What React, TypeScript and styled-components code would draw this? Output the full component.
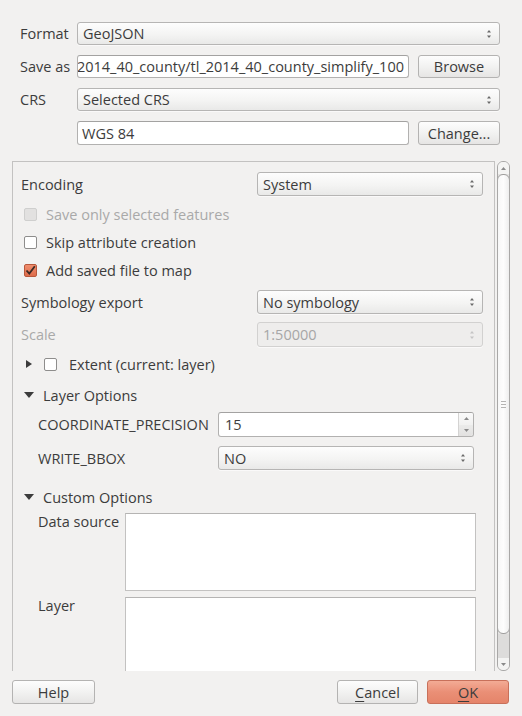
import React from "react";
import styled, { createGlobalStyle, css } from "styled-components";

const GlobalStyle = createGlobalStyle`
  html, body { margin: 0; padding: 0; background: #f2f1f0; }
  body {
    font-family: "Open Sans", "Noto Sans", "DejaVu Sans", sans-serif;
    font-size: 14.5px;
    color: #3c3c3c;
  }
  * { box-sizing: border-box; }
`;

const Root = styled.div`
  width: 522px;
  height: 716px;
  display: flex;
  flex-direction: column;
  overflow: hidden;
`;

const TopGrid = styled.div`
  display: grid;
  grid-template-columns: 52px 1fr 82px;
  grid-template-rows: 23px 23px 23px 24px;
  column-gap: 9px;
  row-gap: 10px;
  padding: 22px 22px 0 20px;
`;

const Label = styled.div<{ $disabled?: boolean; $top?: boolean }>`
  display: flex;
  align-items: ${(p) => (p.$top ? "flex-start" : "center")};
  white-space: nowrap;
  line-height: 17px;
  color: ${(p) => (p.$disabled ? "#a9a9a9" : "#3c3c3c")};
`;

const Span = styled.div<{ $col: string; $shift?: number }>`
  grid-column: ${(p) => p.$col};
  min-width: 0;
  margin-left: ${(p) => p.$shift ?? 0}px;
`;

const comboBase = css`
  height: 100%;
  width: 100%;
  display: flex;
  align-items: center;
  border-radius: 3px;
  white-space: nowrap;
  overflow: hidden;
`;

const ComboBox = styled.div<{ $disabled?: boolean }>`
  ${comboBase};
  justify-content: space-between;
  padding: 0 7px 0 5px;
  border: 1px solid ${(p) => (p.$disabled ? "#d2d1d0" : "#b6b5b4")};
  background: ${(p) =>
    p.$disabled
      ? "#eeedec"
      : "linear-gradient(#fdfdfd, #f4f4f3 55%, #e9e9e8)"};
  color: ${(p) => (p.$disabled ? "#a6a6a6" : "#3c3c3c")};
  box-shadow: 0 1px 0 rgba(255, 255, 255, 0.6);
`;

const TextInput = styled.div<{ $alignEnd?: boolean }>`
  ${comboBase};
  justify-content: ${(p) => (p.$alignEnd ? "flex-end" : "flex-start")};
  padding: 0 4px;
  border: 1px solid #b2b1b0;
  border-top-color: #a3a2a1;
  background: #ffffff;
`;

const InputText = styled.span`
  flex: none;
`;

const Button = styled.div<{ $primary?: boolean }>`
  height: 100%;
  display: flex;
  align-items: center;
  justify-content: center;
  border-radius: 3px;
  border: 1px solid ${(p) => (p.$primary ? "#c8705a" : "#b4b3b2")};
  background: ${(p) =>
    p.$primary
      ? "linear-gradient(#f3ab95, #ea8f76 50%, #e5846a)"
      : "linear-gradient(#fdfdfd, #f2f2f1 50%, #e6e5e4)"};
  color: #3c3c3c;
  white-space: nowrap;
  u { text-decoration-thickness: 1px; text-underline-offset: 3px; }
`;

const Arrows = () => (
  <svg width="6" height="10" viewBox="0 0 6 10">
    <path d="M3 1 L5 3.5 L1 3.5 Z" fill="#6a6a6a" />
    <path d="M3 9 L5 6.5 L1 6.5 Z" fill="#6a6a6a" />
  </svg>
);

const FaintArrows = () => (
  <svg width="6" height="10" viewBox="0 0 6 10">
    <path d="M3 1 L5 3.5 L1 3.5 Z" fill="#c4c4c4" />
    <path d="M3 9 L5 6.5 L1 6.5 Z" fill="#c4c4c4" />
  </svg>
);

/* ---------- scroll area ---------- */

const ScrollFrame = styled.div`
  margin: 16px 12px 0 12px;
  height: 510px;
  display: flex;
  gap: 2px;
`;

const Panel = styled.div`
  flex: 1;
  border: 1px solid #c3c2c1;
  border-bottom: none;
  padding: 10px 11px 0 8px;
  display: flex;
  flex-direction: column;
  overflow: hidden;
`;

const Row = styled.div<{ $h: number; $mt: number; $indent?: number }>`
  flex: none;
  height: ${(p) => p.$h}px;
  margin-top: ${(p) => p.$mt}px;
  padding-left: ${(p) => p.$indent ?? 0}px;
  display: flex;
  align-items: center;
`;

const FormRow = styled.div<{ $mt: number; $labelW: number; $h: number; $right?: number }>`
  flex: none;
  display: grid;
  grid-template-columns: ${(p) => p.$labelW}px 1fr;
  height: ${(p) => p.$h}px;
  margin-top: ${(p) => p.$mt}px;
  margin-right: ${(p) => p.$right ?? 0}px;
`;

const SubRow = styled(FormRow)`
  padding-left: 17px;
`;

const CheckBox = styled.span<{ $state: "off" | "on" | "disabled"; $ml?: number }>`
  width: 13px;
  height: 13px;
  flex: none;
  margin-left: ${(p) => p.$ml ?? 0}px;
  border-radius: 2px;
  display: inline-flex;
  align-items: center;
  justify-content: center;
  ${(p) =>
    p.$state === "on"
      ? css`
          border: 1px solid #b8583c;
          background: linear-gradient(#f08e6e, #de6c4b);
        `
      : p.$state === "disabled"
      ? css`
          border: 1px solid #cfcfce;
          background: #e2e1e0;
        `
      : css`
          border: 1px solid #8e8d8c;
          background: #ffffff;
        `}
`;

const CheckLabel = styled.span<{ $disabled?: boolean; $gap: number }>`
  margin-left: ${(p) => p.$gap}px;
  color: ${(p) => (p.$disabled ? "#a9a9a9" : "#3c3c3c")};
  white-space: nowrap;
`;

const Check = () => (
  <svg width="11" height="11" viewBox="0 0 11 11">
    <path d="M1.5 5.5 L4.3 8.6 L9.8 1.2" fill="none" stroke="#3a2a25" strokeWidth="1.8" />
  </svg>
);

const Triangle = styled.span<{ $open?: boolean }>`
  width: 0;
  height: 0;
  flex: none;
  ${(p) =>
    p.$open
      ? css`
          margin-left: 3px;
          border-left: 5px solid transparent;
          border-right: 5px solid transparent;
          border-top: 6px solid #3c3c3c;
        `
      : css`
          margin-left: 5px;
          border-top: 4.5px solid transparent;
          border-bottom: 4.5px solid transparent;
          border-left: 6px solid #3c3c3c;
        `}
`;

const SectionTitle = styled.span<{ $gap: number }>`
  margin-left: ${(p) => p.$gap}px;
  white-space: nowrap;
`;

const SpinBox = styled.div`
  ${comboBase};
  border: 1px solid #b2b1b0;
  border-top-color: #a3a2a1;
  background: #fff;
`;

const SpinText = styled.div`
  flex: 1;
  padding-left: 6px;
`;

const SpinButtons = styled.div`
  width: 15px;
  height: 100%;
  display: flex;
  flex-direction: column;
  border-left: 1px solid #d4d3d2;
`;

const SpinHalf = styled.div<{ $down?: boolean }>`
  flex: 1;
  display: flex;
  align-items: center;
  justify-content: center;
  background: ${(p) => (p.$down ? "linear-gradient(#ebebea, #e2e1e0)" : "linear-gradient(#fafafa, #f1f1f0)")};
`;

const TextArea = styled.div<{ $h: number }>`
  height: ${(p) => p.$h}px;
  background: #fff;
  border: 1px solid #c3c2c1;
  border-top-color: #b5b4b3;
`;

const TallRow = styled.div<{ $mt: number }>`
  flex: none;
  display: grid;
  grid-template-columns: 87px 1fr;
  padding-left: 17px;
  margin-right: 7px;
  margin-top: ${(p) => p.$mt}px;
`;

/* ---------- scrollbar ---------- */

const ScrollBar = styled.div`
  width: 13px;
  border: 1px solid #a9a8a7;
  border-radius: 6px;
  background: #e4e3e2;
  display: flex;
  flex-direction: column;
  overflow: hidden;
`;

const ScrollStep = styled.div`
  height: 12px;
  flex: none;
  display: flex;
  align-items: center;
  justify-content: center;
  background: #f4f4f3;
`;

const Thumb = styled.div`
  flex: none;
  height: 460px;
  margin: 0 -1px;
  border: 1px solid #9f9e9d;
  border-radius: 6px;
  background: linear-gradient(90deg, #f7f7f7, #fdfdfd 50%, #eeeeee);
  display: flex;
  align-items: center;
  justify-content: center;
`;

const Trough = styled.div`
  flex: 1;
  background: #dddcdb;
`;

const Grip = () => (
  <svg width="5" height="7" viewBox="0 0 5 7">
    <path d="M0 0.5 H5 M0 3.5 H5 M0 6.5 H5" stroke="#b5b4b3" strokeWidth="1" />
  </svg>
);

const TinyArrow = ({ down }: { down?: boolean }) => (
  <svg width="5" height="3" viewBox="0 0 5 3">
    <path d={down ? "M0 0 L5 0 L2.5 3 Z" : "M0 3 L5 3 L2.5 0 Z"} fill="#8a8a8a" />
  </svg>
);

/* ---------- bottom ---------- */

const ButtonBar = styled.div`
  display: flex;
  align-items: center;
  height: 24px;
  margin: 9px 13px 0 12px;
  gap: 9px;
`;

const BarButton = styled.div<{ $w: number }>`
  width: ${(p) => p.$w}px;
  height: 24px;
`;

const Spacer = styled.div`
  flex: 1;
`;

export default function App() {
  return (
    <Root>
      <GlobalStyle />
      <TopGrid>
        <Label>Format</Label>
        <Span $col="2 / 4" $shift={-4}>
          <ComboBox>
            <span>GeoJSON</span>
            <Arrows />
          </ComboBox>
        </Span>

        <Label>Save as</Label>
        <Span $col="2 / 3" $shift={-4}>
          <TextInput $alignEnd>
            <InputText>2014_40_county/tl_2014_40_county_simplify_100</InputText>
          </TextInput>
        </Span>
        <Button>Browse</Button>

        <Label>CRS</Label>
        <Span $col="2 / 4" $shift={-4}>
          <ComboBox>
            <span>Selected CRS</span>
            <Arrows />
          </ComboBox>
        </Span>

        <div />
        <Span $col="2 / 3" $shift={-4}>
          <TextInput>
            <InputText>WGS 84</InputText>
          </TextInput>
        </Span>
        <Button>Change...</Button>
      </TopGrid>

      <ScrollFrame>
        <Panel>
          <FormRow $mt={0} $h={24} $labelW={236}>
            <Label>Encoding</Label>
            <ComboBox>
              <span>System</span>
              <Arrows />
            </ComboBox>
          </FormRow>

          <Row $h={28} $mt={4} $indent={3}>
            <CheckBox $state="disabled" />
            <CheckLabel $disabled $gap={9}>Save only selected features</CheckLabel>
          </Row>
          <Row $h={28} $mt={0} $indent={3}>
            <CheckBox $state="off" />
            <CheckLabel $gap={9}>Skip attribute creation</CheckLabel>
          </Row>
          <Row $h={28} $mt={0} $indent={3}>
            <CheckBox $state="on">
              <Check />
            </CheckBox>
            <CheckLabel $gap={9}>Add saved file to map</CheckLabel>
          </Row>

          <FormRow $mt={6} $h={24} $labelW={236}>
            <Label>Symbology export</Label>
            <ComboBox>
              <span>No symbology</span>
              <Arrows />
            </ComboBox>
          </FormRow>

          <FormRow $mt={8} $h={25} $labelW={236}>
            <Label $disabled>Scale</Label>
            <ComboBox $disabled>
              <span>1:50000</span>
              <FaintArrows />
            </ComboBox>
          </FormRow>

          <Row $h={24} $mt={5}>
            <Triangle />
            <CheckBox $state="off" $ml={12} />
            <CheckLabel $gap={12}>Extent (current: layer)</CheckLabel>
          </Row>

          <Row $h={24} $mt={7}>
            <Triangle $open />
            <SectionTitle $gap={9}>Layer Options</SectionTitle>
          </Row>

          <SubRow $mt={5} $h={25} $labelW={180} $right={9}>
            <Label>COORDINATE_PRECISION</Label>
            <SpinBox>
              <SpinText>15</SpinText>
              <SpinButtons>
                <SpinHalf>
                  <TinyArrow />
                </SpinHalf>
                <SpinHalf $down>
                  <TinyArrow down />
                </SpinHalf>
              </SpinButtons>
            </SpinBox>
          </SubRow>

          <SubRow $mt={9} $h={24} $labelW={180} $right={9}>
            <Label>WRITE_BBOX</Label>
            <ComboBox>
              <span>NO</span>
              <Arrows />
            </ComboBox>
          </SubRow>

          <Row $h={24} $mt={15}>
            <Triangle $open />
            <SectionTitle $gap={9}>Custom Options</SectionTitle>
          </Row>

          <TallRow $mt={4}>
            <Label $top>Data source</Label>
            <TextArea $h={78} />
          </TallRow>
          <TallRow $mt={6}>
            <Label $top>Layer</Label>
            <TextArea $h={90} />
          </TallRow>
        </Panel>

        <ScrollBar>
          <ScrollStep>
            <TinyArrow />
          </ScrollStep>
          <Thumb>
            <Grip />
          </Thumb>
          <Trough />
          <ScrollStep>
            <TinyArrow down />
          </ScrollStep>
        </ScrollBar>
      </ScrollFrame>

      <ButtonBar>
        <BarButton $w={83}>
          <Button>Help</Button>
        </BarButton>
        <Spacer />
        <BarButton $w={81}>
          <Button>
            <span>
              <u>C</u>ancel
            </span>
          </Button>
        </BarButton>
        <BarButton $w={82}>
          <Button $primary>
            <span>
              <u>O</u>K
            </span>
          </Button>
        </BarButton>
      </ButtonBar>
    </Root>
  );
}
